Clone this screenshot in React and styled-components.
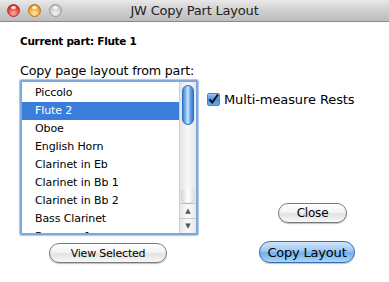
import React from "react";
import styled, { createGlobalStyle } from "styled-components";

const Global = createGlobalStyle`
  html, body { margin: 0; padding: 0; background: #fff; }
  body { font-family: "DejaVu Sans", "Liberation Sans", sans-serif; color: #000; }
`;

const Window = styled.div`
  width: 389px;
  height: 282px;
  background: #fff;
  display: flex;
  flex-direction: column;
  overflow: hidden;
`;

const TitleBar = styled.div`
  height: 22px;
  flex: none;
  position: relative;
  display: flex;
  align-items: center;
  justify-content: center;
  background: linear-gradient(#e9e9e9, #cfcfcf 50%, #bdbdbd);
  border-bottom: 1px solid #8a8a8a;
  box-sizing: border-box;
`;

const Lights = styled.div`
  position: absolute;
  left: 7px;
  top: 4px;
  display: flex;
  gap: 8px;
`;

const Light = styled.div`
  width: 13px;
  height: 13px;
  border-radius: 50%;
  box-sizing: border-box;
  border: 1px solid ${(p) => p.$edge};
  background: radial-gradient(circle at 50% 75%, ${(p) => p.$glow} 0%, ${(p) => p.$base} 55%, ${(p) => p.$dark} 100%);
  position: relative;
  &::after {
    content: "";
    position: absolute;
    left: 3px;
    top: 1px;
    width: 5px;
    height: 3px;
    border-radius: 50%;
    background: rgba(255,255,255,0.85);
  }
`;

const Title = styled.div`
  font-size: 13px;
  color: #222;
  letter-spacing: -0.2px;
`;

const Body = styled.div`
  flex: 1;
  padding: 12px 0 0 20px;
  display: flex;
  flex-direction: column;
`;

const Current = styled.div`
  font-size: 10.5px;
  font-weight: bold;
  height: 14px;
  line-height: 14px;
  letter-spacing: -0.3px;
`;

const Main = styled.div`
  margin-top: 15px;
  display: grid;
  grid-template-columns: 178px 1fr;
  column-gap: 9px;
`;

const LeftCol = styled.div`
  display: flex;
  flex-direction: column;
`;

const Label = styled.div`
  font-size: 12.7px;
  line-height: 16px;
  height: 16px;
  letter-spacing: -0.2px;
`;

const ListBox = styled.div`
  margin-top: 1px;
  height: 155px;
  box-sizing: border-box;
  border: 2px solid #7fa7d8;
  border-radius: 2px;
  box-shadow: 0 0 1px 1px #a9c7ea;
  display: flex;
  overflow: hidden;
  background: #fff;
`;

const Items = styled.div`
  flex: 1;
  padding-top: 2px;
  overflow: hidden;
`;

const Item = styled.div`
  height: 18px;
  line-height: 18px;
  padding-left: 13px;
  font-size: 11px;
  letter-spacing: -0.1px;
  white-space: nowrap;
  background: ${(p) => (p.$sel ? "#3b7ddb" : "transparent")};
  color: ${(p) => (p.$sel ? "#fff" : "#000")};
`;

const ScrollBar = styled.div`
  width: 16px;
  flex: none;
  border-left: 1px solid #cfcfcf;
  background: linear-gradient(90deg, #e4e4e4, #f8f8f8 50%, #e6e6e6);
  display: flex;
  flex-direction: column;
`;

const Track = styled.div`
  flex: 1;
  padding: 3px 1px 0 1px;
  position: relative;
`;

const Thumb = styled.div`
  width: 12px;
  height: 40px;
  margin: 0 auto;
  border-radius: 7px;
  box-sizing: border-box;
  border: 1px solid #2f6fc4;
  background: linear-gradient(90deg, #3f82d8, #9cc8f5 35%, #cfe6ff 50%, #6fa9ea 70%, #3478d2);
`;

const TrackEnd = styled.div`
  position: absolute;
  left: 1px;
  right: 1px;
  bottom: 0;
  height: 14px;
  border-radius: 0 0 7px 7px;
  background: linear-gradient(90deg, #d6d6d6, #ffffff 50%, #dcdcdc);
  box-shadow: 0 1px 1px rgba(0,0,0,0.15);
`;

const Arrow = styled.div`
  height: 14px;
  display: flex;
  align-items: center;
  justify-content: center;
  border-top: 1px solid #c8c8c8;
  background: linear-gradient(90deg, #e8e8e8, #fafafa 50%, #e8e8e8);
  font-size: 7px;
  color: #555;
`;

const RightCol = styled.div`
  display: flex;
  flex-direction: column;
  align-items: flex-start;
  padding-top: 29px;
`;

const CheckRow = styled.label`
  display: flex;
  align-items: center;
  gap: 4px;
  font-size: 13px;
  letter-spacing: -0.1px;
`;

const Box = styled.div`
  width: 13px;
  height: 13px;
  box-sizing: border-box;
  border: 1px solid #5a7fae;
  border-radius: 2px;
  background: linear-gradient(#9fc6f2, #4a8ee0 50%, #6aa9ef);
  display: flex;
  align-items: center;
  justify-content: center;
`;

const Buttons = styled.div`
  margin-top: auto;
  padding-left: 52px;
  display: flex;
  flex-direction: column;
  align-items: flex-start;
  gap: 18px;
`;

const Btn = styled.button`
  height: ${(p) => (p.$tall ? 22 : 20)}px;
  width: ${(p) => p.$w}px;
  margin-left: ${(p) => p.$ml || 0}px;
  padding: 0;
  border-radius: 11px;
  border: 1px solid ${(p) => (p.$primary ? "#3c6cad" : "#7a7a7a")};
  font-family: "DejaVu Sans", sans-serif;
  font-size: ${(p) => p.$size || 11}px;
  letter-spacing: -0.2px;
  white-space: nowrap;
  color: #000;
  background: ${(p) =>
    p.$primary
      ? "linear-gradient(#cfe5fb, #9cc8f3 45%, #74b0ee 55%, #a7d6fa)"
      : "linear-gradient(#ffffff, #f3f3f3 45%, #e2e2e2 55%, #f7f7f7)"};
  box-shadow: 0 1px 1px rgba(0,0,0,0.25);
  display: flex;
  align-items: center;
  justify-content: center;
`;

const ViewWrap = styled.div`
  margin-top: 8px;
  padding-left: 29px;
`;

const items = [
  "Piccolo",
  "Flute 2",
  "Oboe",
  "English Horn",
  "Clarinet in Eb",
  "Clarinet in Bb 1",
  "Clarinet in Bb 2",
  "Bass Clarinet",
  "Bassoon 1",
];

export default function App() {
  return (
    <Window>
      <Global />
      <TitleBar>
        <Lights>
          <Light $edge="#a33" $base="#e4463f" $glow="#ffb0a0" $dark="#b31d17" />
          <Light $edge="#b07a1c" $base="#f2a43a" $glow="#ffe9a0" $dark="#d27a10" />
          <Light $edge="#9a9a9a" $base="#cdcdcd" $glow="#f2f2f2" $dark="#b5b5b5" />
        </Lights>
        <Title>JW Copy Part Layout</Title>
      </TitleBar>
      <Body>
        <Current>Current part: Flute 1</Current>
        <Main>
          <LeftCol>
            <Label>Copy page layout from part:</Label>
            <ListBox>
              <Items>
                {items.map((t, i) => (
                  <Item key={t} $sel={i === 1}>{t}</Item>
                ))}
              </Items>
              <ScrollBar>
                <Track>
                  <Thumb />
                  <TrackEnd />
                </Track>
                <Arrow>▲</Arrow>
                <Arrow>▼</Arrow>
              </ScrollBar>
            </ListBox>
            <ViewWrap>
              <Btn $w={118}>View Selected</Btn>
            </ViewWrap>
          </LeftCol>
          <RightCol>
            <CheckRow>
              <Box>
                <svg width="11" height="11" viewBox="0 0 11 11">
                  <path d="M1.5 5.5 L4.3 8.5 L10 0.5" fill="none" stroke="#111" strokeWidth="2" />
                </svg>
              </Box>
              Multi-measure Rests
            </CheckRow>
            <Buttons>
              <Btn $w={69} $ml={19} $size={12}>Close</Btn>
              <Btn $w={96} $primary $tall $size={13}>Copy Layout</Btn>
            </Buttons>
          </RightCol>
        </Main>
      </Body>
    </Window>
  );
}
